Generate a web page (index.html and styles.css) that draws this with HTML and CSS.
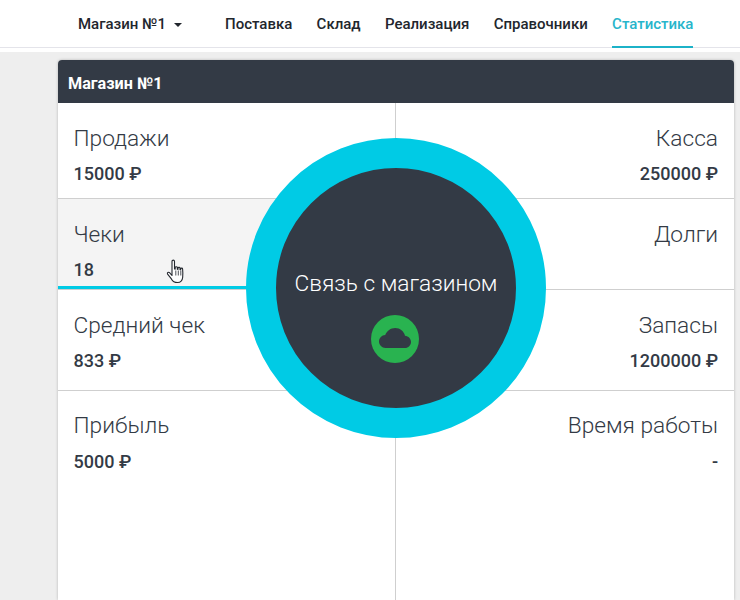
FILE: index.html
```html
<!DOCTYPE html>
<html lang="ru">
<head>
<meta charset="utf-8">
<title>Статистика</title>
<link rel="stylesheet" href="styles.css">
</head>
<body>
<header class="topbar">
  <div class="shop-select">Магазин №1 <span class="caret"></span></div>
  <nav class="nav">
    <a class="nav-item">Поставка</a>
    <a class="nav-item">Склад</a>
    <a class="nav-item">Реализация</a>
    <a class="nav-item">Справочники</a>
    <a class="nav-item active">Статистика</a>
  </nav>
</header>
<main class="content">
  <section class="card">
    <h1 class="card-title">Магазин №1</h1>
    <div class="grid">
      <div class="cell r1"><div class="label">Продажи</div><div class="value">15000 ₽</div></div>
      <div class="cell right r1"><div class="label">Касса</div><div class="value">250000 ₽</div></div>
      <div class="cell r2 hovered"><div class="label">Чеки</div><div class="value">18</div></div>
      <div class="cell right r2"><div class="label">Долги</div></div>
      <div class="cell r3"><div class="label">Средний чек</div><div class="value">833 ₽</div></div>
      <div class="cell right r3"><div class="label">Запасы</div><div class="value">1200000 ₽</div></div>
      <div class="cell last"><div class="label">Прибыль</div><div class="value">5000 ₽</div></div>
      <div class="cell right last"><div class="label">Время работы</div><div class="value">-</div></div>
    </div>
    <div class="status">
      <div class="status-text">Связь с магазином</div>
      <div class="status-icon">
        <svg viewBox="0 0 48 48" width="48" height="48"><path fill="#333a45" d="M14.500 33C11 33 8 30 8 26.500 8 23 10.800 20.200 14.200 20 15.800 15.800 19.700 13 24.200 13 29 13 33 16.300 34 20.700 37.500 21 40 23.600 40 27 40 30.300 37.300 33 34 33z"/></svg>
      </div>
    </div>
    <svg class="cursor" viewBox="0 0 20 26" width="20" height="26"><path fill="#fff" stroke="#23272e" stroke-width="1.100" stroke-linejoin="round" d="M6 2.500c0-1.800 2.500-1.800 2.500 0v7.500l.7.100V8.600c0-1.200 2.100-1.200 2.100 0v1.700l.7.100V9.200c0-1.200 2-1.200 2 0v1.500l.7.100v-.8c0-1.200 1.900-1.200 1.900 0 .3 3 .3 6 .1 8.200-.3 2.800-1.900 5.300-5.100 5.300-3.400 0-5.100-1.500-6.200-3.600L1.600 15.100c-.8-1.300.9-2.500 1.900-1.400L6 16.500z"/><path fill="none" stroke="#23272e" stroke-width=".8" d="M9.800 11.500v5M12.300 11.500v5M14.800 11.500v5"/></svg>
  </section>
</main>
</body>
</html>
```
FILE: styles.css
```css
* { box-sizing: border-box; }
html, body { margin: 0; height: 600px; overflow: hidden; }
body {
  background: #eeeeee;
  font-family: Roboto, "Liberation Sans", sans-serif;
  color: #333a45;
}
.topbar {
  height: 52px;
  background: #fff;
  display: flex;
  align-items: flex-start;
  padding-left: 78px;
  position: relative;
}
.topbar::after {
  content: "";
  position: absolute;
  left: 0;
  right: 0;
  top: 47px;
  height: 1px;
  background: #e4e4ea;
}
.shop-select {
  font-size: 15px;
  font-weight: 500;
  line-height: 48px;
  color: #22262d;
  width: 147px;
}
.caret {
  display: inline-block;
  width: 0;
  height: 0;
  margin-left: 4px;
  vertical-align: 2px;
  border-left: 4px solid transparent;
  border-right: 4px solid transparent;
  border-top: 4px solid #22262d;
}
.nav { display: flex; gap: 24.3px; position: relative; z-index: 1; }
.nav-item {
  font-size: 15px;
  font-weight: 500;
  line-height: 48px;
  height: 48px;
  color: #22262d;
}
.nav-item.active {
  color: #27b5cb;
  border-bottom: 2px solid #1cb2c8;
}
.content { padding: 8px 6px 0 58px; }
.card {
  position: relative;
  background: #fff;
  height: 540px;
  border-radius: 4px 4px 0 0;
  box-shadow: 0 0 3px rgba(0, 0, 0, .25);
}
.card-title {
  margin: 0;
  height: 43px;
  padding: 0 10px;
  background: #333a45;
  color: #fff;
  font-size: 16.200px;
  font-weight: 700;
  line-height: 48px;
  border-radius: 4px 4px 0 0;
}
.grid {
  display: grid;
  grid-template-columns: 337px 339px;
  grid-template-rows: 96px 91px 101px 209px;
}
.cell {
  padding: 23px 16px 0 15.500px;
  border-bottom: 1px solid #cfcfcf;
  position: relative;
}
.cell.right { text-align: right; border-left: 1px solid #cfcfcf; }
.cell.last { border-bottom: 0; padding-top: 22px; }
.cell.last .value { margin-top: 12px; }
.cell.hovered { background: #f4f4f4; }
.cell.hovered::after {
  content: "";
  position: absolute;
  left: 0;
  right: 0;
  bottom: 0;
  height: 3px;
  background: #00cbe5;
}
.label {
  font-size: 22.700px;
  font-weight: 300;
  line-height: 26px;
  color: #333a45;
}
.value {
  margin-top: 11px;
  font-size: 18px;
  font-weight: 500;
  line-height: 22px;
  color: #333a45;
}
.status {
  position: absolute;
  left: 188px;
  top: 78px;
  width: 300px;
  height: 300px;
  border-radius: 50%;
  background: #333a45;
  border: 30px solid #00cbe5;
  display: flex;
  flex-direction: column;
  align-items: center;
  padding-top: 103px;
}
.status-text {
  color: #fff;
  font-size: 22.700px;
  font-weight: 300;
  line-height: 26px;
  white-space: nowrap;
}
.status-icon {
  margin: 18px 2px 0 0;
  width: 48px;
  height: 48px;
  border-radius: 50%;
  background: #29b350;
}
.status-icon svg { display: block; }
.cursor {
  position: absolute;
  left: 108px;
  top: 199px;
}
```
